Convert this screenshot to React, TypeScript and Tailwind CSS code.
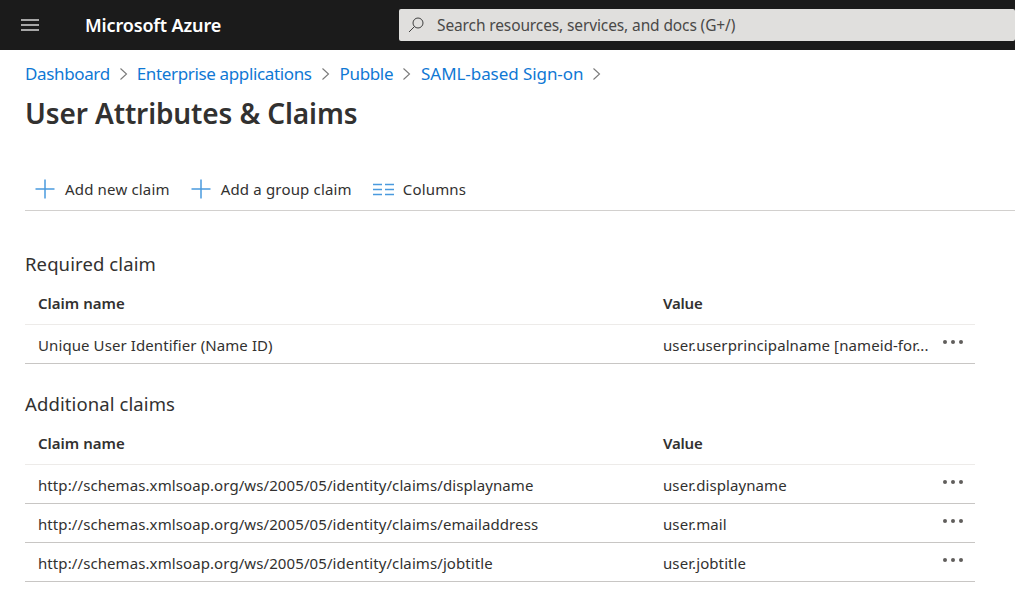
const font = "font-['Noto_Sans','Open_Sans',sans-serif]";

function Chevron() {
  return (
    <svg width="9" height="14" viewBox="0 0 9 14" fill="none" stroke="#7a7a7a" strokeWidth="1.1" className="mx-[9px] shrink-0">
      <path d="M1.5 1.5 7.500 7l-6 5.500" />
    </svg>
  );
}

function Plus() {
  return (
    <svg width="20" height="20" viewBox="0 0 20 20" stroke="#4a9ade" strokeWidth="1.5" className="shrink-0">
      <path d="M10 .5v19M.5 10h19" />
    </svg>
  );
}

function ColumnsIcon() {
  return (
    <svg width="21" height="13" viewBox="0 0 21 13" stroke="#4a9ade" strokeWidth="1.3" className="shrink-0">
      <path d="M0 1.500h9M12 1.500h9M0 6.500h9M12 6.500h9M0 11.500h9M12 11.500h9" />
    </svg>
  );
}

function Dots() {
  return (
    <div className="absolute right-[12px] top-[15px] flex gap-[4px]">
      <span className="size-[4px] rounded-full bg-[#605e5c]" />
      <span className="size-[4px] rounded-full bg-[#605e5c]" />
      <span className="size-[4px] rounded-full bg-[#605e5c]" />
    </div>
  );
}

function ClaimTable({ rows }: { rows: [string, string][] }) {
  return (
    <div className="w-[950px]">
      <div className="flex h-[42px] items-center border-b border-[#edebe9] text-[15px] font-semibold text-[#323130]">
        <div className="w-[638px] pl-[13px]">Claim name</div>
        <div className="tracking-[-0.2px]">Value</div>
      </div>
      {rows.map(([name, value]) => (
        <div key={name} className="relative flex h-[39px] items-center border-b border-[#c8c6c4] pt-[2px] text-[15px] tracking-[0.09px] text-[#323130]">
          <div className="w-[638px] pl-[13px]">{name}</div>
          <div>{value}</div>
          <Dots />
        </div>
      ))}
    </div>
  );
}

export default function App() {
  return (
    <div className={`h-[602px] w-[1015px] overflow-hidden bg-white ${font}`}>
      <header className="flex h-[50px] items-center bg-[#1b1b1b]">
        <svg width="18" height="12" viewBox="0 0 18 12" stroke="#d6d6d6" strokeWidth="1.3" className="ml-[21px] shrink-0">
          <path d="M0 1h18M0 6h18M0 11h18" />
        </svg>
        <div className="ml-[46px] w-[314px] text-[18px] font-semibold tracking-[-0.15px] text-white">Microsoft Azure</div>
        <div className="flex h-[32px] w-[616px] items-center rounded-[2px] bg-[#e0dfdd]">
          <svg width="16" height="16" viewBox="0 0 16 16" fill="none" stroke="#3f3f3f" strokeWidth="1" className="ml-[9px] shrink-0">
            <circle cx="10" cy="6" r="5" />
            <path d="M6.500 9.500 1 15" />
          </svg>
          <span className="ml-[13px] pt-[2px] text-[15.500px] tracking-[-0.12px] text-[#4a4948]">Search resources, services, and docs (G+/)</span>
        </div>
      </header>

      <main className="pl-[25px]">
        <nav className="mt-[12px] flex h-[24px] items-center text-[17px] tracking-[-0.36px] text-[#0f78d4]">
          <a>Dashboard</a>
          <Chevron />
          <a>Enterprise applications</a>
          <Chevron />
          <a className="ml-px">Pubble</a>
          <Chevron />
          <a className="ml-px tracking-[-0.07px]">SAML-based Sign-on</a>
          <Chevron />
        </nav>
        <h1 className="mt-[8px] h-[40px] text-[28px] leading-[38px] font-semibold tracking-[-0.12px] text-[#323130]">User Attributes &amp; Claims</h1>

        <div className="mt-[36px] flex h-[41px] items-center gap-[21px] border-b border-[#d2d0ce] pb-[2px] pl-[10px] text-[15px] tracking-[0.17px] text-[#323130]">
          <div className="flex items-center gap-[10px]">
            <Plus />
            <span>Add new claim</span>
          </div>
          <div className="flex items-center gap-[10px]">
            <Plus />
            <span>Add a group claim</span>
          </div>
          <div className="flex items-center gap-[9px]">
            <ColumnsIcon />
            <span>Columns</span>
          </div>
        </div>

        <h2 className="mt-[39px] h-[33px] text-[18.500px] leading-[27px] tracking-[0.1px] text-[#323130]">Required claim</h2>
        <ClaimTable rows={[["Unique User Identifier (Name ID)", "user.userprincipalname [nameid-for..."]]} />

        <h2 className="mt-[26px] h-[33px] text-[18.500px] leading-[27px] tracking-[0.1px] text-[#323130]">Additional claims</h2>
        <ClaimTable
          rows={[
            ["http://schemas.xmlsoap.org/ws/2005/05/identity/claims/displayname", "user.displayname"],
            ["http://schemas.xmlsoap.org/ws/2005/05/identity/claims/emailaddress", "user.mail"],
            ["http://schemas.xmlsoap.org/ws/2005/05/identity/claims/jobtitle", "user.jobtitle"],
          ]}
        />
      </main>
    </div>
  );
}
